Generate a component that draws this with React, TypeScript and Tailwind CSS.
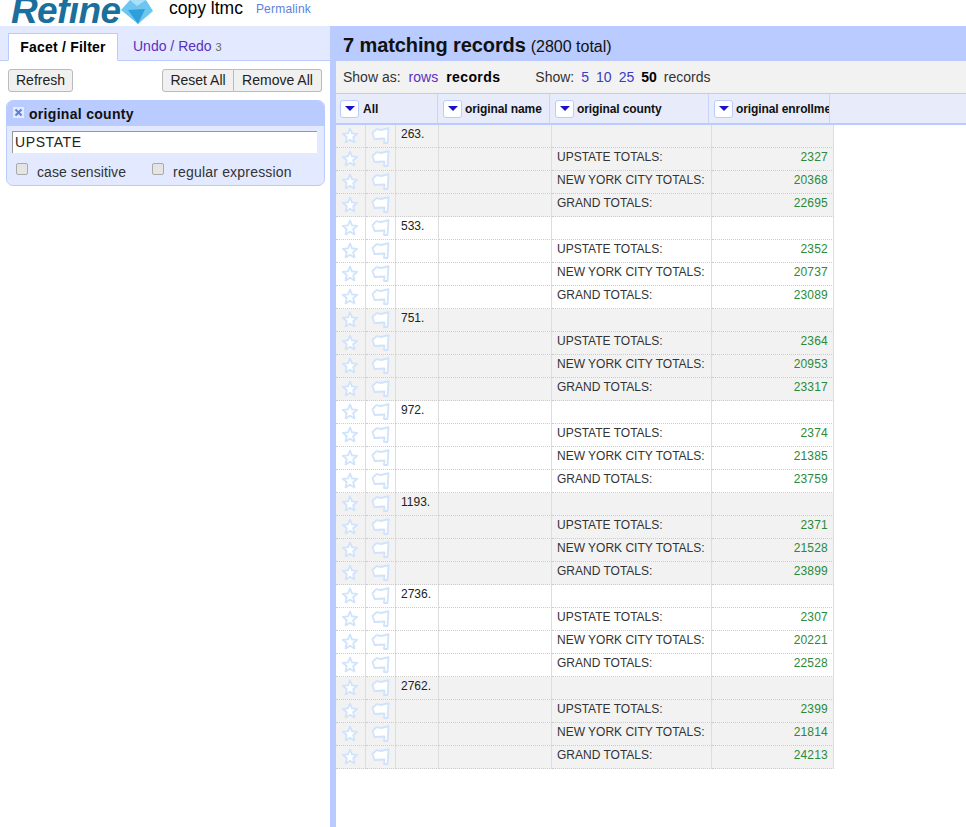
import React from "react";

const records = [
  { id: "263.", v: ["2327", "20368", "22695"] },
  { id: "533.", v: ["2352", "20737", "23089"] },
  { id: "751.", v: ["2364", "20953", "23317"] },
  { id: "972.", v: ["2374", "21385", "23759"] },
  { id: "1193.", v: ["2371", "21528", "23899"] },
  { id: "2736.", v: ["2307", "20221", "22528"] },
  { id: "2762.", v: ["2399", "21814", "24213"] },
];

const labels = ["UPSTATE TOTALS:", "NEW YORK CITY TOTALS:", "GRAND TOTALS:"];

function Star() {
  return (
    <svg width="18" height="17" viewBox="0 0 18 17" className="block mb-[1px] mr-[1px]">
      <path
        d="M9 1.5 L11 6.3 L16.2 6.8 L12.2 10.2 L13.5 15.4 L9 12.7 L4.5 15.4 L5.8 10.2 L1.8 6.8 L7 6.3 Z"
        fill="#ffffff"
        stroke="#cfe3fb"
        strokeWidth="1.8"
        strokeLinejoin="round"
      />
    </svg>
  );
}

function Flag() {
  return (
    <svg width="19" height="18" viewBox="0 0 19 18" className="block mb-[1px] mr-[1px]">
      <path
        d="M1.5 6 L5.5 2.2 L10 3 L17.5 1.2 L16.5 16 L13 16 L13.5 11.5 L3.5 12 Z"
        fill="#ffffff"
        stroke="#cfe3fb"
        strokeWidth="1.8"
        strokeLinejoin="round"
      />
    </svg>
  );
}

function Dropdown() {
  return (
    <span className="flex w-[19px] h-[18px] items-center justify-center rounded-[3px] border border-[#b9cbff] bg-white shrink-0">
      <span className="w-0 h-0 border-x-[5px] border-x-transparent border-t-[5px] border-t-[#1a10c9]" />
    </span>
  );
}

function Cells({ id, label, value, first }: { id: string; label: string; value: string; first: boolean }) {
  const cell = "h-[23px] border-r border-r-[#dddddd] border-b border-b-[#cccccc] [border-bottom-style:dotted]";
  return (
    <div className="flex">
      <div className={`${cell} w-[30px] flex items-center justify-center`}>
        <Star />
      </div>
      <div className={`${cell} w-[30px] flex items-center justify-center`}>
        <Flag />
      </div>
      <div className={`${cell} w-[43px] pl-[5px] leading-[19px] text-[#222222]`}>{first ? id : ""}</div>
      <div className={`${cell} w-[113px]`} />
      <div className={`${cell} w-[160px] pl-[5px] leading-[19px] text-[#333333] whitespace-nowrap`}>{label}</div>
      <div className={`${cell} w-[122px] pr-[5px] text-right leading-[19px] tracking-[0.2px] text-[#2a8a3a]`}>
        {value}
      </div>
    </div>
  );
}

export default function App() {
  return (
    <div className="w-[966px] h-[827px] overflow-hidden bg-white text-[#222222] font-['Liberation_Sans',Arial,sans-serif] flex flex-col">
      <div className="h-[26px] flex shrink-0 overflow-hidden">
        <div className="w-[169px] h-[26px] relative overflow-hidden">
          <span className="absolute left-[73px] top-[-9px] font-bold text-[10px] leading-[12px] tracking-[1px] text-[#7fd0f2]">
            OPEN
          </span>
          <span className="absolute left-[11px] top-[-11px] font-bold italic text-[37px] leading-[44px] tracking-[-0.6px] text-[#1b6f9c]">
            Refine
          </span>
          <svg width="34" height="26" viewBox="0 0 34 26" className="absolute left-[120px] top-0">
            <path d="M1 10 L10 0 L26 0 L33 11 L18 24 Z" fill="#6cc6ef" />
            <path d="M8 10 L25 9 L18 24 Z" fill="#2f9fdc" />
            <path d="M10 0 L17 6 L26 0 Z" fill="#a9e0f8" />
          </svg>
        </div>
        <span className="text-[17.5px] leading-[16px] text-black">copy ltmc</span>
        <span className="ml-[13px] text-[12px] leading-[18px] tracking-[0.2px] text-[#5b7fe0]">Permalink</span>
      </div>

      <div className="flex flex-1 min-h-0">
        <div className="w-[330px] shrink-0 flex flex-col">
          <div className="h-[35px] bg-[#e3e9ff] border-b border-[#b9cbff] flex items-end pl-[8px] shrink-0">
            <div className="w-[110px] h-[28px] mb-[-1px] bg-white border border-[#b9cbff] border-b-white text-center font-bold text-[14px] leading-[27px] tracking-[0.2px] text-black">
              Facet / Filter
            </div>
            <div className="ml-[15px] h-[27px] text-[14px] leading-[27px] text-[#5a2fc0]">
              Undo / Redo <span className="text-[11px] text-[#666666]">3</span>
            </div>
          </div>
          <div className="flex justify-between pl-[8px] pr-[8px] mt-[8px]">
            <button className="h-[23px] w-[65px] rounded-[3px] border border-[#bbbbbb] bg-[#f0f0f0] text-[14px] text-[#222222]">
              Refresh
            </button>
            <div className="flex">
              <button className="h-[23px] w-[72px] rounded-l-[3px] border border-[#bbbbbb] bg-[#f0f0f0] text-[14px] text-[#222222]">
                Reset All
              </button>
              <button className="h-[23px] w-[88px] rounded-r-[3px] border border-l-0 border-[#bbbbbb] bg-[#f0f0f0] text-[14px] text-[#222222]">
                Remove All
              </button>
            </div>
          </div>
          <div className="mx-[6px] mt-[8px] h-[86px] w-[319px] rounded-[7px] border border-[#b9cbff] bg-[#e3e9ff] overflow-hidden">
            <div className="h-[25px] bg-[#b9cbff] flex items-center pl-[6px]">
              <svg width="11" height="11" viewBox="0 0 11 11" className="block mb-[3px]">
                <rect width="11" height="11" fill="#e3e9ff" />
                <path d="M2.5 2.5 L8.5 8.5 M8.5 2.5 L2.5 8.5" stroke="#5a7fd8" strokeWidth="2" />
              </svg>
              <span className="ml-[5px] mt-[1px] font-bold text-[14px] tracking-[0.3px] text-[#111111]">
                original county
              </span>
            </div>
            <div className="mx-[5px] mt-[5px] h-[22px] w-[305px] border border-[#999999] border-r-0 border-b-0 bg-white pl-[2px] text-[14px] leading-[21px] tracking-[0.6px] text-[#222222]">
              UPSTATE
            </div>
            <div className="flex items-start mt-[4px] text-[14px] text-[#333333]">
              <span className="ml-[9px] mt-[6px] w-[12px] h-[12px] rounded-[2px] border border-[#aaaaaa] bg-[#e4e4e4]" />
              <span className="ml-[9px] mt-[6px] leading-[18px] tracking-[0.08px]">case sensitive</span>
              <span className="ml-[26px] mt-[6px] w-[12px] h-[12px] rounded-[2px] border border-[#aaaaaa] bg-[#e4e4e4]" />
              <span className="ml-[9px] mt-[6px] leading-[18px] tracking-[0.2px]">regular expression</span>
            </div>
          </div>
        </div>

        <div className="flex-1 min-w-0 flex flex-col border-l-[6px] border-[#b9cbff]">
          <div className="h-[35px] bg-[#b9cbff] pl-[7px] flex items-baseline shrink-0 leading-[38px] text-[#111111]">
            <span className="font-bold text-[20px] tracking-[-0.1px]">7 matching records</span>
            <span className="ml-[5px] text-[16px]">(2800 total)</span>
          </div>
          <div className="h-[32px] bg-[#f2f2f2] pl-[7px] flex items-center text-[14px] text-[#333333] shrink-0">
            <span>Show as:</span>
            <span className="ml-[8px] text-[#5a2fc0]">rows</span>
            <span className="ml-[8px] font-bold text-black tracking-[0.4px]">records</span>
            <span className="ml-[35px]">Show:</span>
            <span className="ml-[7px] text-[#3a3ac8]">5</span>
            <span className="ml-[7px] text-[#3a3ac8]">10</span>
            <span className="ml-[7px] text-[#3a3ac8]">25</span>
            <span className="ml-[7px] font-bold text-black">50</span>
            <span className="ml-[7px]">records</span>
          </div>
          <div className="h-[32px] bg-[#e8ebf9] border-y border-[#b9cbff] border-b-[2px] flex shrink-0 text-[12px] font-bold text-[#111111]">
            <div className="w-[102px] flex items-center pl-[4px] gap-[4px] border-r border-[#c9d4f7]">
              <Dropdown />
              <span>All</span>
            </div>
            <div className="w-[112px] flex items-center pl-[5px] gap-[3px] border-r border-[#c9d4f7] whitespace-nowrap">
              <Dropdown />
              <span className="tracking-[-0.1px]">original name</span>
            </div>
            <div className="w-[159px] flex items-center pl-[5px] gap-[3px] border-r border-[#c9d4f7] whitespace-nowrap">
              <Dropdown />
              <span className="tracking-[-0.1px]">original county</span>
            </div>
            <div className="w-[121px] flex items-center pl-[5px] gap-[3px] border-r border-[#c9d4f7] whitespace-nowrap overflow-hidden">
              <Dropdown />
              <span className="tracking-[-0.1px]">original enrollment</span>
            </div>
          </div>
          <div className="text-[12px]">
            {records.map((r, i) => (
              <div key={r.id} className={`w-[498px] ${i % 2 === 0 ? "bg-[#f2f2f2]" : "bg-white"}`}>
                <Cells id={r.id} label="" value="" first />
                {labels.map((l, j) => (
                  <Cells key={l} id={r.id} label={l} value={r.v[j]} first={false} />
                ))}
              </div>
            ))}
          </div>
        </div>
      </div>
    </div>
  );
}
